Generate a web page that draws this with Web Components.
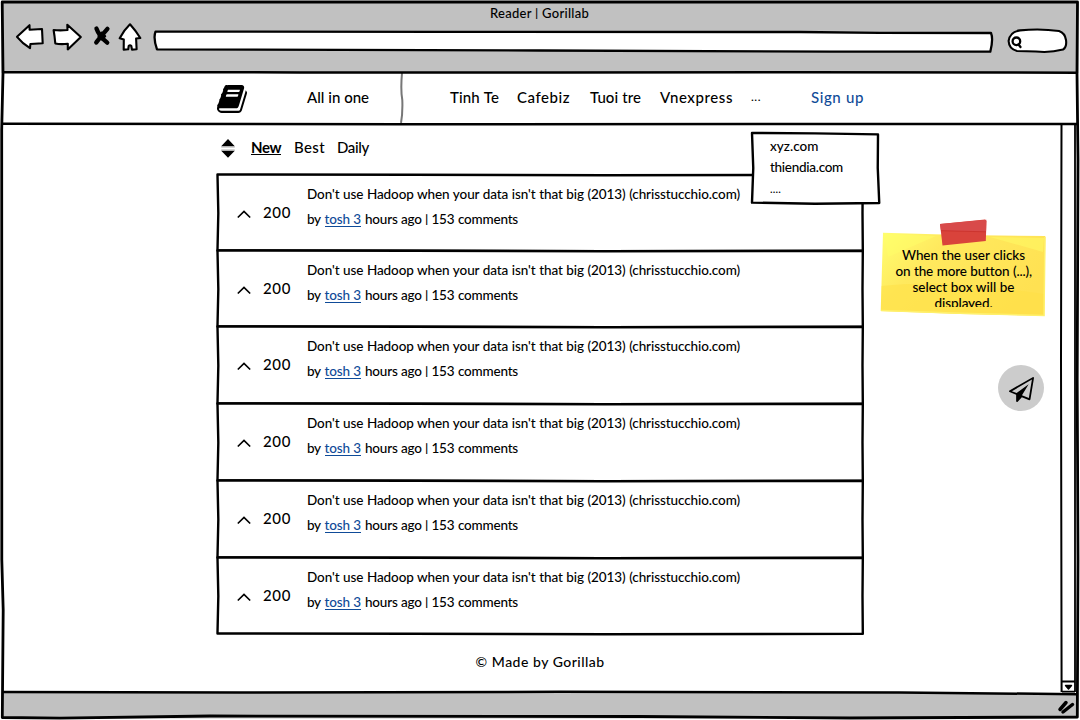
<!DOCTYPE html>
<html lang="en">
<head>
<meta charset="utf-8">
<title>Reader | Gorillab</title>
<style>
html,body{margin:0;height:100%;background:#fff;overflow:hidden}
body{font-family:Lato,"Open Sans",sans-serif;color:#000}
</style>
</head>
<body>
<reader-app></reader-app>
<script>
const define = (name, html, setup) => {
  const t = document.createElement('template');
  t.innerHTML = html;
  customElements.define(name, class extends HTMLElement {
    connectedCallback() {
      if (this.shadowRoot) return;
      this.attachShadow({mode:'open'}).append(t.content.cloneNode(true));
      if (setup) setup(this, this.shadowRoot);
    }
  });
};

/* A single line of text, tracked to fill the width "w". */
define('fit-text', `<style>
:host{display:block;flex:none;height:20px;line-height:20px;white-space:pre;font-weight:500;word-spacing:.3px}
span{display:inline-block}
::slotted(i){font-style:normal;font-size:.8em;font-weight:700;position:relative;top:-1px}
:host([link]){color:#0f4b98}
:host([bold]){font-weight:700}
:host([line]) span{box-shadow:0 1px 0 currentColor;height:17px;line-height:20px}
</style><span><slot></slot></span>`, (el, root) => {
  const w = +el.getAttribute('w'), s = root.querySelector('span');
  el.style.width = w + 'px';
  el.style.fontSize = (el.getAttribute('size') || 15) + 'px';
  const n = el.textContent.length;
  const natural = s.getBoundingClientRect().width;
  s.style.letterSpacing = ((w - natural) / n) + 'px';
});

/* Hand-drawn rectangle outline behind its content. */
define('sketch-box', `<style>
:host{display:block;position:relative;box-sizing:border-box;background:#fff}
svg{position:absolute;left:0;top:0;width:100%;height:100%;overflow:visible;pointer-events:none}
path{fill:none;stroke:#000;stroke-width:2.4;vector-effect:non-scaling-stroke;stroke-linejoin:round;stroke-linecap:round}
</style><svg viewBox="0 0 100 100" preserveAspectRatio="none"><path/></svg><slot></slot>`, (el, root) => {
  root.querySelector('path').setAttribute('d', el.getAttribute('path') ||
   'M-.08 -.6L30 -.4L60 .3L100.05 -.3L100 50L100.05 99.7L60 100.3L30 99.6L-.08 99.4L.05 50Z');
});

define('tool-bar', `<style>
:host{display:flex;flex-direction:column;align-items:center;height:73px;background:#c1c1c1;box-sizing:border-box;padding-top:3px}
.row{display:flex;align-self:stretch}
svg{display:block}
path,circle{stroke:#000;stroke-width:2.1;fill:#fff;stroke-linejoin:round;stroke-linecap:round}
</style>
<fit-text w="99" size="13" style="margin-left:-1px">Reader <i>|</i> Gorillab</fit-text>
<div class="row">
<svg width="48" height="50" viewBox="0 23 48 50"><path d="M17 36.8L29.5 25.2L29.6 29.8L42 29L42.7 43.3L30.4 44L30 48.2Q22 43 17 36.8Z"/></svg>
<svg width="40" height="50" viewBox="48 23 40 50"><path d="M53.6 30Q60 30.7 67.5 30L67.3 24.7L80.8 37L67.8 49.4L67.8 43.8Q60 44.6 55.3 43.4L54.5 36Z"/></svg>
<svg width="27" height="50" viewBox="88 23 27 50"><path style="stroke-width:4.4;fill:none" d="M96.500 28.600Q99 36 107.2 42.6M107.4 28.9Q102 35 96.3 42.4"/><path d="M101.700 32.500L105.200 36.200L101.700 39.500L98.500 36.200Z" style="fill:#000"/></svg>
<svg width="35" height="50" viewBox="115 23 35 50"><path d="M130 24.3Q136 31 140.300 38L136.100 38.500L136.600 49.300L132 49.600L131.300 46Q130 44.500 128.700 46L128.200 49.300L123.700 49.600L123.800 39.500L119.700 38.300Q124 30 130 24.300Z"/></svg>
<svg width="850" height="50" viewBox="150 23 850 50"><path style="stroke-width:2.3" d="M155.500 31.600L440 31.900L800 32L880 32.800L991 33Q993.500 39 990.300 51.700L830 51.700L540 50.500L157 49.300Q153 38 155.500 31.600Z"/></svg>
<svg width="76" height="50" viewBox="1000 23 76 50"><path d="M1008.600 41Q1010 31.500 1020 30.400Q1040 28.300 1059 31Q1065 33 1066 40Q1067 47 1063 49.500Q1050 53 1036 51.500L1017 51Q1009 49 1008.600 41Z"/><circle cx="1016.400" cy="41.300" r="3.800" style="stroke-width:2.300"/><path d="M1018.500 44.500L1020.500 47" style="stroke-width:2.300"/></svg>
</div>`);

define('site-nav', `<style>
:host{display:flex;height:51px;align-items:flex-start;background:#fff;padding-left:217px;box-sizing:border-box}
svg{display:block;flex:none}
fit-text{margin-top:14px}
</style>
<svg style="margin-top:11.500px" width="30" height="28" viewBox="0 128 1664 1536" preserveAspectRatio="none"><path d="M1639 478q40 57 18 129l-275 906q-19 64-76.500 107.500t-122.500 43.500h-923q-77 0-148.500-53.500t-99.500-131.500q-24-67-2-127 0-4 3-27t4-37q1-8-3-21.500t-3-19.500q2-11 8-21t16.500-23.500 16.500-23.500q23-38 45-91.500t30-91.500q3-10 .5-30t-.5-28q3-11 17-28t17-23q21-36 42-92t25-90q1-9-2.500-32t.5-28q4-13 22-30.500t22-22.500q19-26 42.500-84.500t27.500-96.500q1-8-3-25.500t-2-26.500q2-8 9-18t18-23 17-21q8-12 16.500-30.500t15-35 16-36 19.500-32 26.500-23.500 36-11.500 47.500 5.500l-1 3q38-9 51-9h761q74 0 114 56t18 130l-274 906q-36 119-71.500 153.500t-128.500 34.500h-869q-27 0-38 15-11 16-1 43 24 70 144 70h923q29 0 56-15.500t35-41.500l300-987q7-22 5-57 38 15 59 43zm-1064 2q-4 13 2 22.500t20 9.500h608q13 0 25.500-9.500t16.500-22.500l21-64q4-13-2-22.500t-20-9.500h-608q-13 0-25.500 9.500t-16.500 22.500zm-83 256q-4 13 2 22.500t20 9.500h608q13 0 25.500-9.500t16.500-22.500l21-64q4-13-2-22.500t-20-9.500h-608q-13 0-25.500 9.500t-16.500 22.500z"/></svg>
<fit-text style="margin-left:60px" w="62">All in one</fit-text>
<svg style="margin-left:29px" width="8" height="51" viewBox="0 0 8 51"><path d="M4 0Q2.500 17 4.300 27Q4.800 40 3 50" fill="none" stroke="#777" stroke-width="2"/></svg>
<fit-text style="margin-left:44px" w="49">Tinh Te</fit-text>
<fit-text style="margin-left:18px" w="53">Cafebiz</fit-text>
<fit-text style="margin-left:20px" w="51">Tuoi tre</fit-text>
<fit-text style="margin-left:19px" w="73">Vnexpress</fit-text>
<fit-text style="margin-left:18px" w="10" size="12">...</fit-text>
<fit-text style="margin-left:50px" w="53" link>Sign up</fit-text>`);

define('filter-bar', `<style>
:host{display:flex;height:51px;padding-left:4px;align-items:flex-start;box-sizing:border-box}
svg{display:block;margin-top:14px}
fit-text{margin-top:13px}
</style>
<svg width="14" height="20" viewBox="221 138 14 20"><path d="M228 139L234.800 146.200H221.200ZM221.200 150.800H234.800L228 157.800Z"/><path d="M221.200 147H234.800M221.200 150H234.800" stroke="#999" stroke-width=".8"/></svg>
<fit-text style="margin-left:16px" w="30" bold line>New</fit-text>
<fit-text style="margin-left:13px" w="31">Best</fit-text>
<fit-text style="margin-left:12px" w="32">Daily</fit-text>`);

define('story-row', `<style>
:host{display:block}
sketch-box{height:100%;display:block}
.in{display:flex;padding-left:19px}
.chev{display:block;margin-top:34px}
.n{margin:27px 0 0 12px}
.text{margin:9px 0 0 16px}
.by{display:flex;margin-top:5px;gap:4px}
</style>
<sketch-box><div class="in">
<svg class="chev" width="14" height="12" viewBox="0 0 14 12"><path d="M.8 8.500L7 2.500L13.200 8.500" fill="none" stroke="#000" stroke-width="1.700"/></svg>
<fit-text class="n" w="28">200</fit-text>
<div class="text">
<fit-text w="433" size="13.5">Don't use Hadoop when your data isn't that big (2013) (chrisstucchio.com)</fit-text>
<div class="by"><fit-text w="13.5" size="13.5">by</fit-text><fit-text w="36.5" size="13.5" link line>tosh 3</fit-text><fit-text w="153" size="13.5">hours ago <i>|</i> 153 comments</fit-text></div>
</div></div></sketch-box>`);

define('story-list', `<style>
:host{display:grid;grid-template-rows:76px 76px 77px 77px 77px 76px;width:644.5px;margin-left:1px}
</style>` + '<story-row></story-row>'.repeat(6));

define('more-menu', `<style>
:host{display:block;position:absolute;left:751.5px;top:133px;width:126px;height:70px}
sketch-box{height:100%;padding:3px 0 0 18.500px}
</style><sketch-box path="M0 0L50 .5L100 2L99.800 50L101 100L50 101L0 99.500L1 50Z">
<fit-text w="48.5" size="13.5">xyz.com</fit-text>
<fit-text w="73" size="13.5" style="margin-top:1px">thiendia.com</fit-text>
<fit-text w="11" size="11" style="margin-top:2px">....</fit-text>
</sketch-box>`);

define('sticky-note', `<style>
:host{display:block;position:absolute;left:880px;top:218px;width:167px;height:100px}
svg{position:absolute;left:0;top:0}
.t{position:relative;display:flex;flex-direction:column;align-items:center;margin:27px 0 0 0;height:61.5px;overflow:hidden}
.t fit-text{height:16px;line-height:20px}
</style>
<svg width="167" height="100" viewBox="880 218 167 100">
<defs><linearGradient id="g" x1="0" y1="0" x2="1" y2=".5"><stop offset="0" stop-color="#ffff70"/><stop offset=".35" stop-color="#ffe95e"/><stop offset=".7" stop-color="#ffe558"/><stop offset="1" stop-color="#ffe152"/></linearGradient></defs>
<path d="M883 232.700L960 235L1045.300 236L1044.300 315.700L960 314L880.700 311Z" fill="url(#g)"/>
<path d="M881.500 286Q925 281 984 286L1044 294V315.500L960 313.500L881 310.500Z" fill="#ffdf43" opacity=".5"/>
<path d="M884 234L936 236L888 257ZM990 237L1044 238L1043 252Z" fill="#ffff68" opacity=".45"/>
<path d="M881 310.500L960 313.300L1044 315.500L1045 237" fill="none" stroke="#fff06b" stroke-width="1.500"/>
<path d="M940 224L985 219.500L986.500 221L985.800 241L942.500 245.500Z" fill="#d9433b"/>
<path d="M940 224L986.300 219.700L986 232L941 230.500Z" fill="#d84a4a"/>
<path d="M941 230.700L986 231.800" stroke="#c9302a" stroke-width=".8"/>
</svg>
<div class="t"><fit-text w="123" size="13.5">When the user clicks</fit-text><fit-text w="136" size="13.5">on the more button (...),</fit-text><fit-text w="102" size="13.5">select box will be</fit-text><fit-text w="58" size="13.5">displayed.</fit-text></div>`);

define('send-button', `<style>
:host{position:absolute;left:998px;top:365px;width:46px;height:46px;border-radius:50%;background:#ccc;display:flex;align-items:center;justify-content:center}
svg{margin-top:2px}
</style><svg width="25" height="25" viewBox="0 0 1792 1792"><path d="M1764 11q33 24 27 64l-256 1536q-5 29-32 45-14 8-31 8-11 0-24-5l-527-215-298 327q-18 21-47 21-14 0-23-4-19-7-30-23.500t-11-36.500v-452l-472-193q-37-14-40-55-3-39 32-59l1664-960q35-21 68 2zm-342 1499l221-1323-1434 827 336 137 863-639-478 797z"/></svg>`);

/* Pen strokes of the window: outer frame, bar rules and scrollbar. */
define('window-frame', `<style>
:host{position:absolute;inset:0;pointer-events:none}
svg{display:block}path{fill:none;stroke:#000;stroke-width:2.500;stroke-linejoin:round}
</style><svg width="1080" height="720" viewBox="0 0 1080 720">
<path d="M0 0H1080V720H0Z" style="stroke:#fff;stroke-width:3"/>
<path d="M2.200 2H1077.500L1077 73L1078 160L1077.200 380L1078 560L1077.300 717L850 718L640 716.500L210 716L60 718.200L2.300 717.500L3.200 610L1.800 560L1.700 130L3 73Z" style="stroke-width:2.800"/>
<path d="M3 72.200L300 72.400L560 72.600L800 72.300L1077 72.700M3 123.800L400 124.200L760 124L1077 123.900"/>
<path d="M3 692L240 692.600L560 691.800L900 692.500L1077 694.200"/>
<path d="M1061.500 125L1061 360L1061.600 692" style="stroke-width:2"/>
<path d="M1075 125V692" style="stroke-width:1.800"/>
<path d="M1062 681.500H1075M1062 691.700H1075" style="stroke-width:1.800"/>
<path d="M1065.500 685.500H1071.500L1068.500 689Z" style="fill:#000;stroke-width:1.400"/>
<path d="M1060 709.500L1066 702.500M1063 712L1072.500 704.500" style="stroke-width:3.500;stroke-linecap:round"/>
</svg>`);

define('reader-app', `<style>
:host{display:flex;flex-direction:column;position:relative;width:1080px;height:720px;overflow:hidden}
main{flex:1;display:flex;flex-direction:column;padding-left:217px;background:#fff}
.foot{margin:18px 0 0 258.5px}
.status{height:27px;background:#c1c1c1}
</style>
<tool-bar></tool-bar><site-nav></site-nav>
<main><filter-bar></filter-bar><story-list></story-list><fit-text class="foot" w="129" size="14">© Made by Gorillab</fit-text></main>
<div class="status"></div>
<more-menu></more-menu><sticky-note></sticky-note><send-button></send-button><window-frame></window-frame>`);
</script>
</body>
</html>
